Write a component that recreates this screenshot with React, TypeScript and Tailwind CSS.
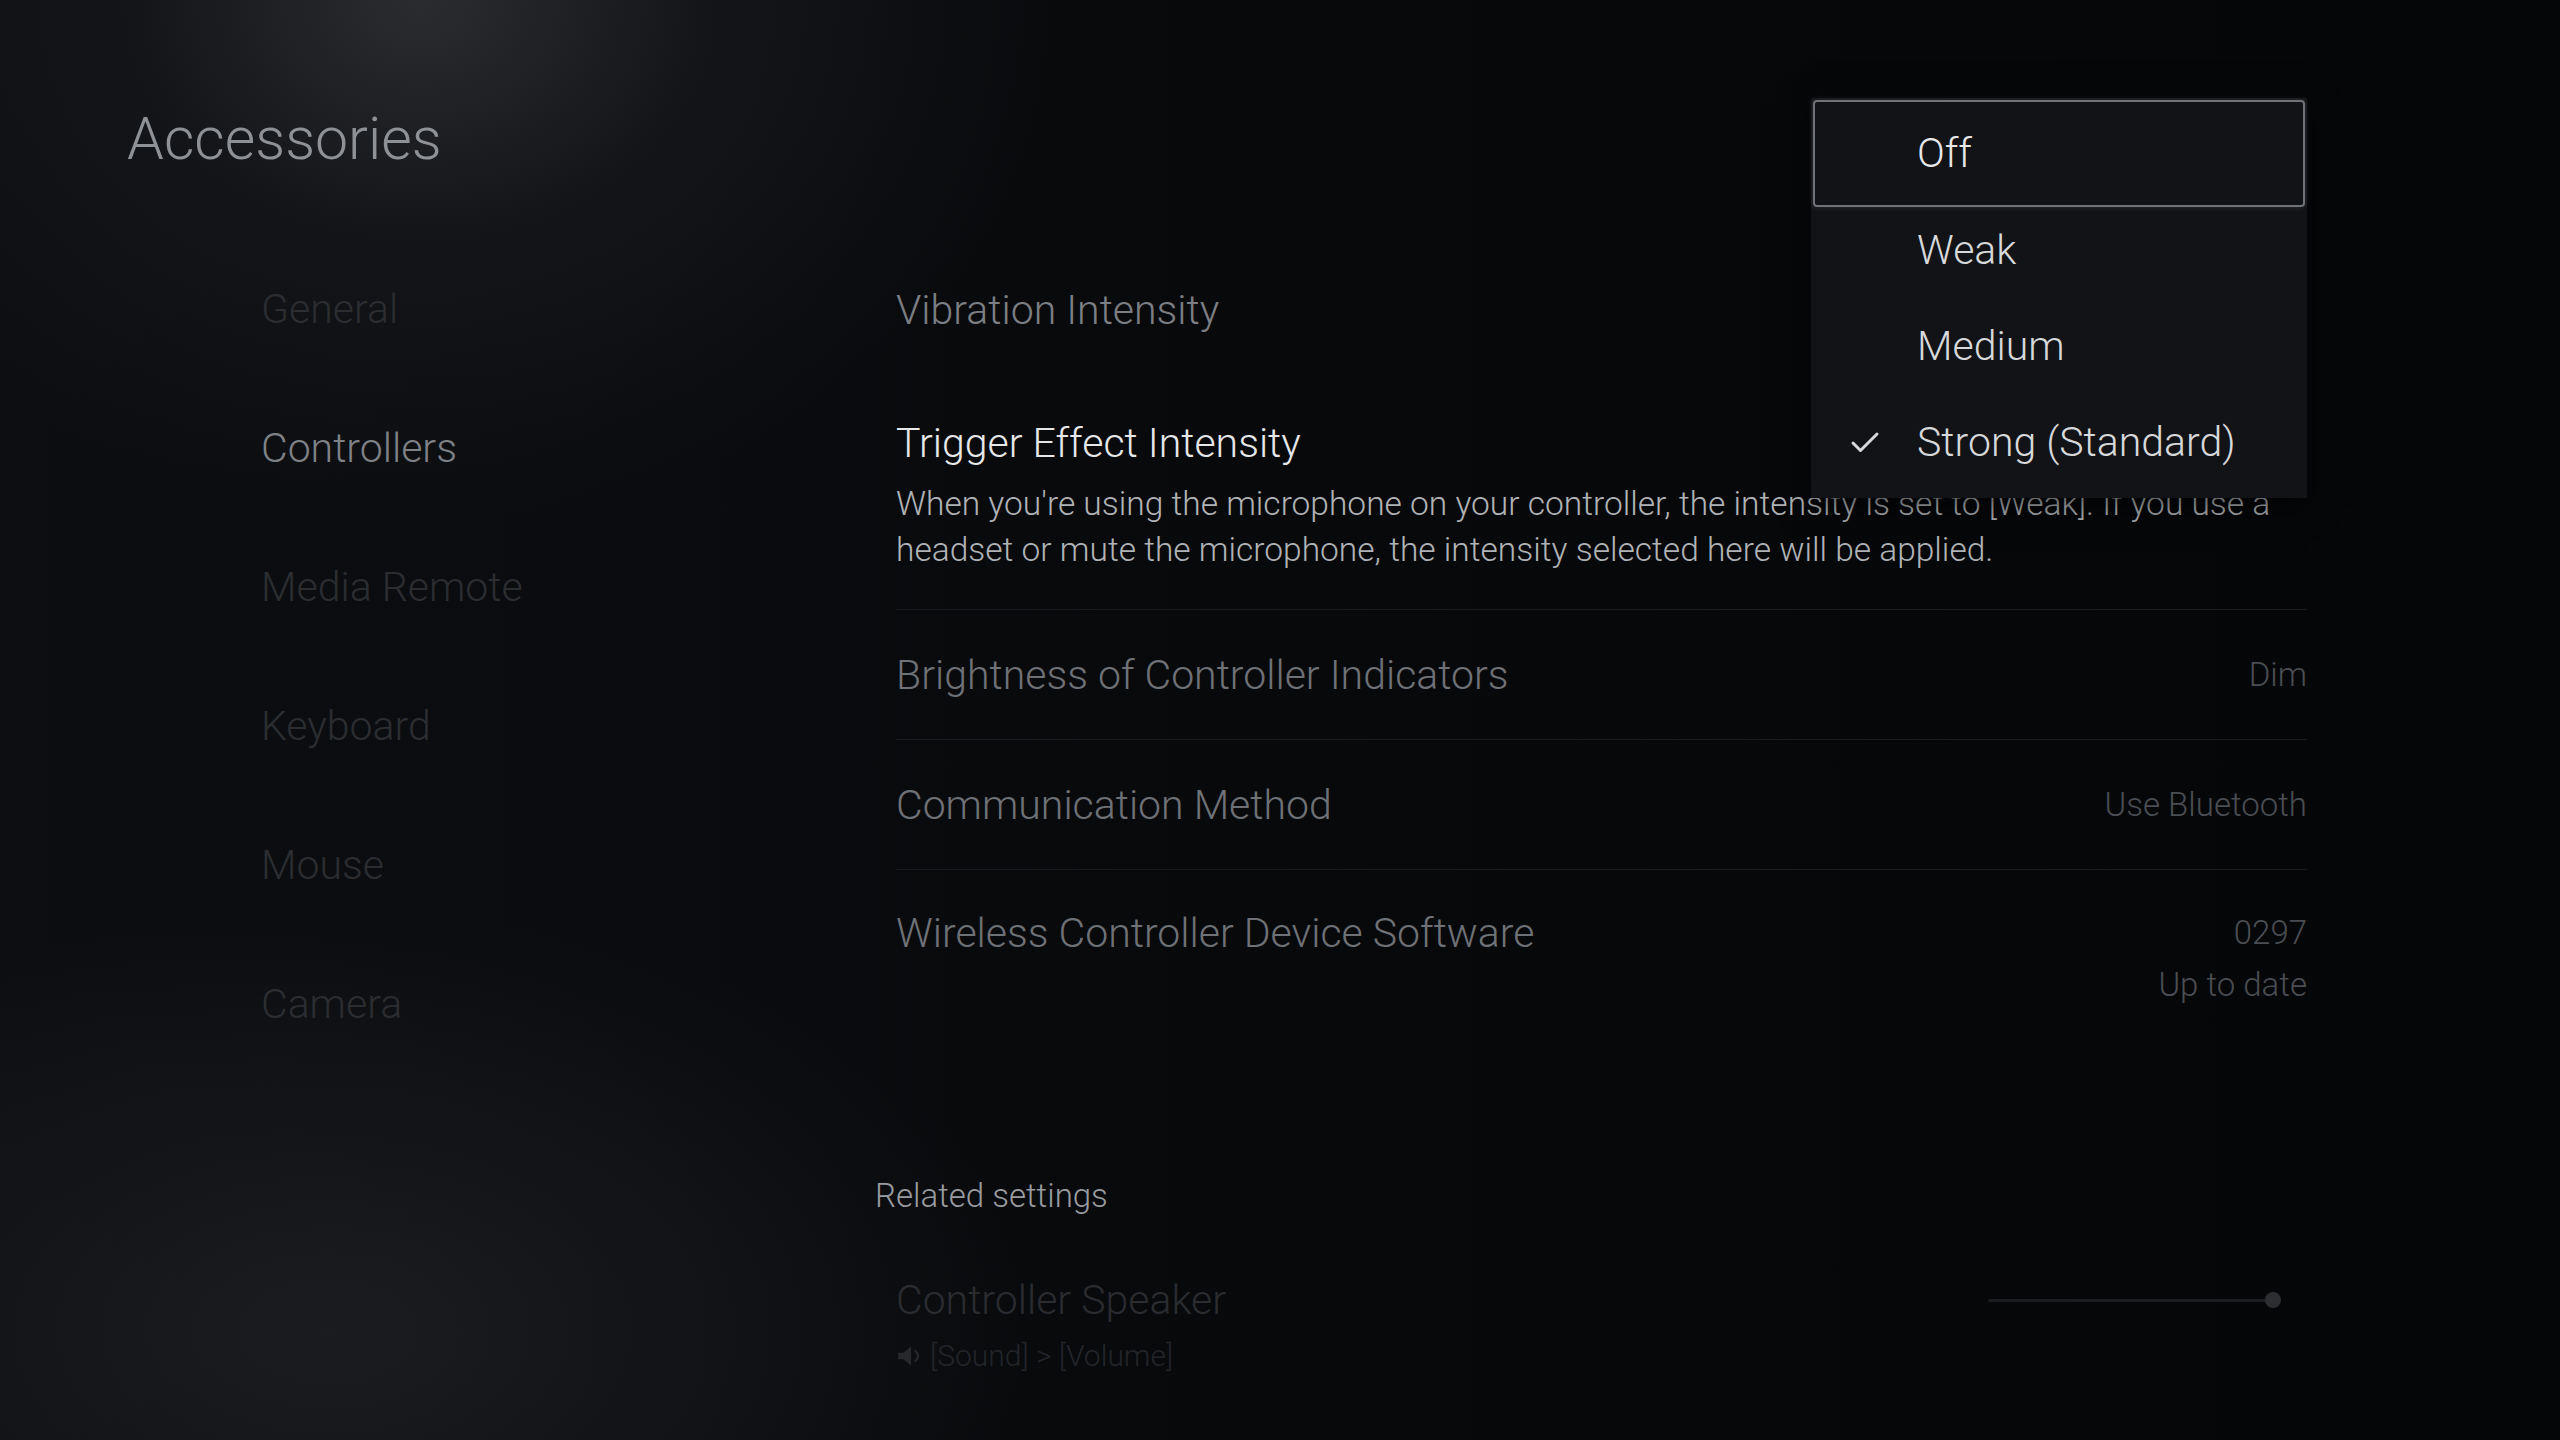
import { Check } from "lucide-react";

const navItems = [
  { label: "General", active: false },
  { label: "Controllers", active: true },
  { label: "Media Remote", active: false },
  { label: "Keyboard", active: false },
  { label: "Mouse", active: false },
  { label: "Camera", active: false },
];

const options = ["Weak", "Medium", "Strong (Standard)"];

function SpeakerIcon() {
  return (
    <svg width="28" height="24" viewBox="0 0 26 22" className="shrink-0">
      <path d="M2 8h5l7-6v18l-7-6H2z" fill="#26282c" />
      <path d="M18 6.5c1.6 1.2 2.4 2.7 2.4 4.5s-.8 3.3-2.4 4.5" stroke="#26282c" strokeWidth="2" fill="none" strokeLinecap="round" />
    </svg>
  );
}

function Row({ title, value }: { title: string; value: string }) {
  return (
    <div className="h-[130px] flex items-center justify-between border-b border-[#1a1c1f]">
      <span className="text-[41px] leading-[44px] text-[#6e7176]">{title}</span>
      <span className="text-[33px] leading-[44px] text-[#4a4d52]">{value}</span>
    </div>
  );
}

export default function App() {
  return (
    <div
      className="relative w-[2560px] h-[1440px] overflow-hidden flex font-light bg-[radial-gradient(ellipse_640px_520px_at_420px_0px,#2a2c30_0%,#141518_45%,transparent_100%),radial-gradient(ellipse_700px_420px_at_330px_1330px,#1a1c1f_0%,transparent_100%),linear-gradient(90deg,#0d0e11_0%,#08090b_50%,#050608_100%)]"
      style={{ fontFamily: "Roboto, 'Open Sans', sans-serif" }}
    >
      {/* left: title + categories */}
      <div className="w-[896px] shrink-0 pl-[127px] pt-[99px]">
        <h1 className="text-[59px] leading-[80px] font-light text-[#8e9196]">Accessories</h1>
        <nav className="mt-[61px] pl-[134px] flex flex-col">
          {navItems.map((item) => (
            <div
              key={item.label}
              className={
                item.active
                  ? "h-[139px] flex items-center text-[41px] text-[#7e8186]"
                  : "h-[139px] flex items-center text-[41px] text-[#2b2d31]"
              }
            >
              {item.label}
            </div>
          ))}
        </nav>
      </div>

      {/* right: settings list */}
      <div className="w-[1411px] shrink-0 pt-[245px] flex flex-col">
        <div className="h-[130px] flex items-center">
          <span className="text-[41px] leading-[44px] text-[#7b7e83]">Vibration Intensity</span>
        </div>

        <div className="pt-[48px] pb-[36px] border-b border-[#1a1c1f]">
          <div className="text-[41px] leading-[40px] text-[#e6e7e9]">Trigger Effect Intensity</div>
          <p className="mt-[18px] text-[33.5px] leading-[46px] text-[#b0b3b6]">
            When you're using the microphone on your controller, the intensity is set to [Weak]. If you use a
            <br />
            headset or mute the microphone, the intensity selected here will be applied.
          </p>
        </div>

        <Row title="Brightness of Controller Indicators" value="Dim" />
        <Row title="Communication Method" value="Use Bluetooth" />

        <div className="pt-[41px] flex justify-between items-start">
          <span className="text-[41px] leading-[44px] text-[#6e7176]">Wireless Controller Device Software</span>
          <div className="flex flex-col items-end text-[33px] leading-[44px] text-[#4a4d52]">
            <span>0297</span>
            <span className="mt-[8px]">Up to date</span>
          </div>
        </div>

        <div className="mt-[169px] -ml-[21px] text-[33px] leading-[40px] text-[#999ca0]">Related settings</div>

        <div className="mt-[62px] flex items-center justify-between">
          <span className="text-[41px] leading-[44px] text-[#2a2c30]">Controller Speaker</span>
          <div className="mr-[26px] flex items-center">
            <div className="w-[285px] h-[3px] rounded-full bg-[#1b1d20]" />
            <div className="-ml-[8px] w-[16px] h-[16px] rounded-full bg-[#2c2e32]" />
          </div>
        </div>
        <div className="mt-[18px] flex items-center gap-[6px] text-[30px] leading-[32px] text-[#232529]">
          <SpeakerIcon />
          <span>[Sound] &gt; [Volume]</span>
        </div>
      </div>

      {/* dropdown overlay */}
      <div className="absolute left-[1811px] top-[98px] w-[496px] h-[400px] bg-[#121316] shadow-[0_8px_30px_rgba(0,0,0,0.6)] px-[2px]">
        <div className="mt-[2px] h-[107px] flex items-center pl-[102px] border-2 border-[#6f7276] rounded-[4px] shadow-[0_0_6px_rgba(160,165,170,0.2)] text-[41px] text-[#e6e7e9]">
          Off
        </div>
        <div className="-mt-[4px] flex flex-col">
          {options.map((opt) => (
            <div key={opt} className="h-[96px] flex items-center text-[41px] text-[#d6d8da]">
              <div className="w-[104px] flex justify-end pr-[34px]">
                {opt === "Strong (Standard)" && <Check size={36} strokeWidth={2} className="text-[#d6d8da]" />}
              </div>
              <span>{opt}</span>
            </div>
          ))}
        </div>
      </div>
    </div>
  );
}
